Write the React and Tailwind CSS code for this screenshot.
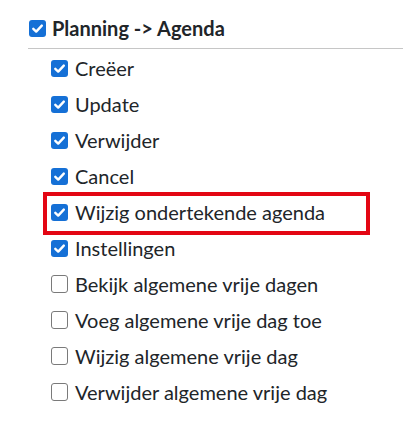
import React from "react";

const items = [
  { label: "Creëer", checked: true },
  { label: "Update", checked: true },
  { label: "Verwijder", checked: true },
  { label: "Cancel", checked: true },
  { label: "Wijzig ondertekende agenda", checked: true, marked: true },
  { label: "Instellingen", checked: true },
  { label: "Bekijk algemene vrije dagen", checked: false },
  { label: "Voeg algemene vrije dag toe", checked: false },
  { label: "Wijzig algemene vrije dag", checked: false },
  { label: "Verwijder algemene vrije dag", checked: false },
];

function Box({ checked }) {
  if (!checked) {
    return <span className="h-[18px] w-[17px] shrink-0 rounded-[3px] border-[1.5px] border-[#7a7a7a] bg-white" />;
  }
  return (
    <span className="flex h-[17px] w-[17px] shrink-0 items-center justify-center rounded-[3px] bg-[#1570d6]">
      <svg width="13" height="13" viewBox="0 0 13 13" fill="none">
        <path d="M2.3 6.8 L5.2 9.6 L10.8 3.6" stroke="white" strokeWidth="2.4" strokeLinecap="round" strokeLinejoin="round" />
      </svg>
    </span>
  );
}

export default function App() {
  return (
    <div
      className="h-[442px] w-[403px] bg-white pt-[10px] text-[#212529]"
      style={{ fontFamily: "Lato, 'Noto Sans', sans-serif" }}
    >
      <label className="flex h-[36px] items-center gap-[6px] pl-[29px] text-[20px] font-bold">
        <Box checked />
        <span>Planning -&gt; Agenda</span>
      </label>
      <div className="ml-[28px] mt-[2px] h-px bg-[#c6c6c6]" />
      <ul className="relative pl-[51px] pt-px">
        {items.map((it) => (
          <li key={it.label} className="relative flex h-[36px] items-center gap-[7px] text-[20px]">
            <Box checked={it.checked} />
            <span>{it.label}</span>
            {it.marked && (
              <div className="pointer-events-none absolute -left-[8px] top-[-2px] h-[43px] w-[327px] border-[4px] border-[#e30613]" />
            )}
          </li>
        ))}
      </ul>
    </div>
  );
}
